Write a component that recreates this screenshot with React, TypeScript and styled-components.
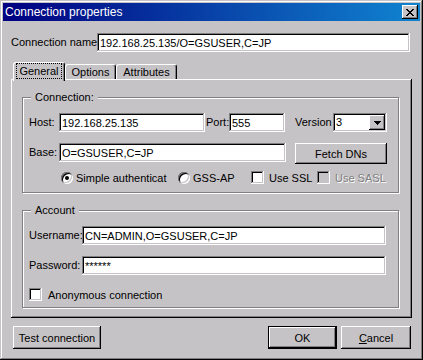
import styled, { createGlobalStyle, css } from 'styled-components'

const face = '#c6c3c6'
const shade = '#808080'

const GlobalStyle = createGlobalStyle`
  html, body {
    margin: 0;
    padding: 0;
    background: ${face};
  }
  body {
    font-family: 'Liberation Sans', Arial, sans-serif;
    font-size: 11px;
    color: #000;
  }
  * {
    box-sizing: border-box;
  }
`

const raised = css`
  box-shadow: inset -1px -1px #000, inset 1px 1px #fff, inset -2px -2px ${shade}, inset 2px 2px ${face};
`

const sunken = css`
  box-shadow: inset -1px -1px #fff, inset 1px 1px ${shade}, inset -2px -2px ${face}, inset 2px 2px #000;
`

const Window = styled.div`
  width: 423px;
  height: 360px;
  padding: 3px;
  background: ${face};
  box-shadow: inset -1px -1px #000, inset 1px 1px ${face}, inset -2px -2px ${shade}, inset 2px 2px #fff;
  display: flex;
  flex-direction: column;
`

const TitleBar = styled.div`
  height: 18px;
  padding: 0 2px;
  display: flex;
  align-items: center;
  justify-content: space-between;
  background: linear-gradient(90deg, #000080, #1084d0);
  color: #fff;
`

const TitleText = styled.span`
  font-size: 12px;
  white-space: nowrap;
`

const CloseButton = styled.div`
  width: 16px;
  height: 14px;
  background: ${face};
  ${raised};
  display: flex;
  align-items: center;
  justify-content: center;
`

const Body = styled.div`
  flex: 1;
  display: flex;
  flex-direction: column;
  padding: 12px 8px 0;
`

const Row = styled.div<{ $top?: number; $center?: boolean; $indent?: number; $mr?: number }>`
  display: flex;
  align-items: ${p => (p.$center ? 'center' : 'flex-start')};
  margin-top: ${p => p.$top ?? 0}px;
  margin-right: ${p => p.$mr ?? 0}px;
  padding-left: ${p => p.$indent ?? 0}px;
`

const Label = styled.span<{ $w: number; $ml?: number }>`
  flex: none;
  width: ${p => p.$w}px;
  margin-left: ${p => p.$ml ?? 0}px;
  line-height: 19px;
  white-space: nowrap;
  overflow: hidden;
`

const TextBox = styled.input<{ $w?: number }>`
  flex: ${p => (p.$w ? 'none' : '1')};
  width: ${p => (p.$w ? `${p.$w}px` : 'auto')};
  min-width: 0;
  height: 19px;
  margin: 0;
  padding: 0 3px;
  border: 0;
  outline: none;
  background: #fff;
  ${sunken};
  font: inherit;
  color: #000;
`

const Select = styled.div<{ $w: number }>`
  flex: none;
  width: ${p => p.$w}px;
  height: 19px;
  padding: 2px;
  background: #fff;
  ${sunken};
  display: flex;
`

const SelectValue = styled.span`
  flex: 1;
  padding-left: 1px;
  line-height: 15px;
`

const DropButton = styled.span`
  width: 16px;
  height: 15px;
  background: ${face};
  ${raised};
  display: flex;
  align-items: center;
  justify-content: center;
`

const TabStrip = styled.div`
  height: 17px;
  margin-top: 10px;
  padding-left: 2px;
  display: flex;
  align-items: flex-end;
`

const Tab = styled.div<{ $w: number; $active?: boolean }>`
  position: relative;
  z-index: ${p => (p.$active ? 1 : 0)};
  width: ${p => p.$w}px;
  height: ${p => (p.$active ? 19 : 15)}px;
  margin-bottom: ${p => (p.$active ? -2 : 0)}px;
  padding-bottom: ${p => (p.$active ? 3 : 0)}px;
  background: ${face};
  border: 1px solid;
  border-bottom: 0;
  border-color: #fff #000 transparent #fff;
  border-radius: 3px 3px 0 0;
  box-shadow: inset -1px 0 ${shade};
  display: flex;
  align-items: center;
  justify-content: center;
  white-space: nowrap;
`

const FocusText = styled.span`
  padding: 1px 2px;
  outline: 1px dotted #000;
`

const Panel = styled.div`
  height: 239px;
  padding: 18px 13px 0 11px;
  background: ${face};
  ${raised};
`

const Group = styled.div<{ $h: number; $top?: number }>`
  position: relative;
  height: ${p => p.$h}px;
  margin-top: ${p => p.$top ?? 0}px;
  padding: 15px 0 0 6px;
  border: 1px solid ${shade};
  box-shadow: inset 1px 1px #fff, 1px 1px #fff;
`

const Legend = styled.span`
  position: absolute;
  top: -7px;
  left: 8px;
  padding: 0 4px;
  line-height: 13px;
  background: ${face};
  white-space: nowrap;
`

const Choice = styled.label<{ $w?: number; $gap: number }>`
  flex: none;
  width: ${p => (p.$w ? `${p.$w}px` : 'auto')};
  display: flex;
  align-items: center;
  gap: ${p => p.$gap}px;
  white-space: nowrap;
`

const ChoiceText = styled.span<{ $disabled?: boolean }>`
  color: ${p => (p.$disabled ? shade : '#000')};
  text-shadow: ${p => (p.$disabled ? '1px 1px #fff' : 'none')};
`

const Radio = styled.span`
  flex: none;
  width: 12px;
  height: 12px;
  border-radius: 50%;
  background: #fff;
  box-shadow: inset 1px 1px ${shade}, inset -1px -1px #fff, inset 2px 2px #000, inset -2px -2px ${face};
  display: flex;
  align-items: center;
  justify-content: center;
`

const RadioDot = styled.span`
  width: 4px;
  height: 4px;
  border-radius: 50%;
  background: #000;
`

const Check = styled.span<{ $disabled?: boolean }>`
  flex: none;
  width: 13px;
  height: 13px;
  background: ${p => (p.$disabled ? face : '#fff')};
  ${sunken};
`

const ButtonBar = styled.div`
  height: 23px;
  margin-top: 8px;
  padding: 0 1px 0 2px;
  display: flex;
  align-items: flex-start;
`

const Spacer = styled.div`
  flex: 1;
`

const Button = styled.button<{ $w: number; $h?: number; $default?: boolean; $ml?: number }>`
  flex: none;
  width: ${p => p.$w}px;
  height: ${p => p.$h ?? 23}px;
  margin: 0 0 0 ${p => p.$ml ?? 0}px;
  padding: 0;
  border: ${p => (p.$default ? '1px solid #000' : '0')};
  background: ${face};
  ${raised};
  font: inherit;
  color: #000;
  white-space: nowrap;
`

const CloseIcon = () => (
  <svg width="8" height="7" viewBox="0 0 8 7" shapeRendering="crispEdges">
    <path
      fill="#000"
      d="M0 0h2v1H0zM6 0h2v1H6zM1 1h2v1H1zM5 1h2v1H5zM2 2h4v1H2zM3 3h2v1H3zM2 4h4v1H2zM1 5h2v1H1zM5 5h2v1H5zM0 6h2v1H0zM6 6h2v1H6z"
    />
  </svg>
)

const DownArrow = () => (
  <svg width="7" height="4" viewBox="0 0 7 4" shapeRendering="crispEdges">
    <path fill="#000" d="M0 0h7v1H0zM1 1h5v1H1zM2 2h3v1H2zM3 3h1v1H3z" />
  </svg>
)

export default function App() {
  return (
    <>
      <GlobalStyle />
      <Window>
        <TitleBar>
          <TitleText>Connection properties</TitleText>
          <CloseButton>
            <CloseIcon />
          </CloseButton>
        </TitleBar>

        <Body>
          <Row $mr={2}>
            <Label $w={86}>Connection name</Label>
            <TextBox readOnly value="192.168.25.135/O=GSUSER,C=JP" />
          </Row>

          <TabStrip>
            <Tab $w={52} $active>
              <FocusText>General</FocusText>
            </Tab>
            <Tab $w={51}>Options</Tab>
            <Tab $w={61}>Attributes</Tab>
          </TabStrip>

          <Panel>
            <Group $h={96}>
              <Legend>Connection:</Legend>
              <Row>
                <Label $w={30}>Host:</Label>
                <TextBox $w={146} readOnly value="192.168.25.135" />
                <Label $w={23} $ml={1}>Port:</Label>
                <TextBox $w={56} readOnly value="555" />
                <Label $w={38} $ml={10}>Version</Label>
                <Select $w={54}>
                  <SelectValue>3</SelectValue>
                  <DropButton>
                    <DownArrow />
                  </DropButton>
                </Select>
              </Row>
              <Row $top={11}>
                <Label $w={30}>Base:</Label>
                <TextBox $w={227} readOnly value="O=GSUSER,C=JP" />
                <Button $w={92} $h={21} $ml={9} type="button">
                  Fetch DNs
                </Button>
              </Row>
              <Row $top={7} $indent={32} $center>
                <Choice $w={117} $gap={3}>
                  <Radio>
                    <RadioDot />
                  </Radio>
                  <ChoiceText>Simple authenticat</ChoiceText>
                </Choice>
                <Choice $w={73} $gap={3}>
                  <Radio />
                  <ChoiceText>GSS-AP</ChoiceText>
                </Choice>
                <Choice $w={66} $gap={5}>
                  <Check />
                  <ChoiceText>Use SSL</ChoiceText>
                </Choice>
                <Choice $gap={5}>
                  <Check $disabled />
                  <ChoiceText $disabled>Use SASL</ChoiceText>
                </Choice>
              </Row>
            </Group>

            <Group $h={98} $top={17}>
              <Legend>Account</Legend>
              <Row>
                <Label $w={53}>Username:</Label>
                <TextBox $w={304} readOnly value="CN=ADMIN,O=GSUSER,C=JP" />
              </Row>
              <Row $top={11}>
                <Label $w={53}>Password:</Label>
                <TextBox $w={304} readOnly value="******" />
              </Row>
              <Row $top={13} $center>
                <Choice $gap={6}>
                  <Check />
                  <ChoiceText>Anonymous connection</ChoiceText>
                </Choice>
              </Row>
            </Group>
          </Panel>

          <ButtonBar>
            <Button $w={88} type="button">
              Test connection
            </Button>
            <Spacer />
            <Button $w={69} $default type="button">
              OK
            </Button>
            <Button $w={70} $ml={4} type="button">
              <u>C</u>ancel
            </Button>
          </ButtonBar>
        </Body>
      </Window>
    </>
  )
}
